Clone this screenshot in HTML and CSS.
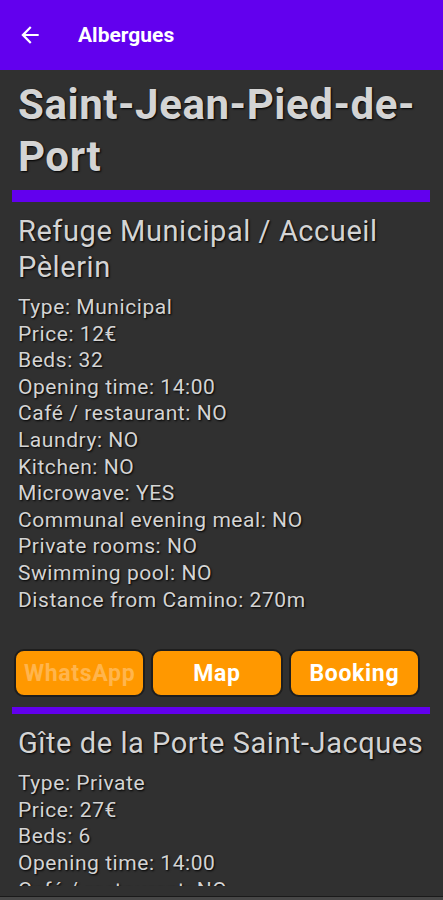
FILE: index.html
```html
<!DOCTYPE html>
<html lang="en">
<head>
    <meta charset="UTF-8">
    <meta name="viewport" content="width=device-width, initial-scale=1.0">
    <title>Albergues</title>
    <link rel="stylesheet" href="styles.css">
</head>
<body>

<header class="app-bar">
    <svg class="back" viewBox="0 0 24 24" width="26" height="26">
        <path d="M20 11H7.83l5.59-5.59L12 4l-8 8 8 8 1.41-1.41L7.83 13H20v-2z" fill="#fff"/>
    </svg>
    <span class="app-title">Albergues</span>
</header>

<div class="scroll">
    <h1 class="town">Saint-Jean-Pied-de-Port</h1>
    <div class="divider thick"></div>

    <!-- Albergue 1 -->
    <h2 class="name">Refuge Municipal / Accueil Pèlerin</h2>
    <div class="details">
        <div>Type: Municipal</div>
        <div>Price: 12€</div>
        <div>Beds: 32</div>
        <div>Opening time: 14:00</div>
        <div>Café / restaurant: NO</div>
        <div>Laundry: NO</div>
        <div>Kitchen: NO</div>
        <div>Microwave: YES</div>
        <div>Communal evening meal: NO</div>
        <div>Private rooms: NO</div>
        <div>Swimming pool: NO</div>
        <div>Distance from Camino: 270m</div>
    </div>
    <div class="buttons">
        <button class="btn disabled">WhatsApp</button>
        <button class="btn">Map</button>
        <button class="btn">Booking</button>
    </div>
    <div class="divider"></div>

    <!-- Albergue 2 -->
    <h2 class="name">Gîte de la Porte Saint-Jacques</h2>
    <div class="details">
        <div>Type: Private</div>
        <div>Price: 27€</div>
        <div>Beds: 6</div>
        <div>Opening time: 14:00</div>
        <div>Café / restaurant: NO</div>
    </div>
</div>

<div class="bottom-edge"></div>

</body>
</html>
```

FILE: styles.css
```css
body {
    margin: 0;
    height: 900px;
    overflow: hidden;
    font-family: Roboto, "Noto Sans", sans-serif;
    background-color: #303030;
    color: #d4d4d4;
}
.app-bar {
    height: 70px;
    background-color: #6200ee;
    display: flex;
    align-items: center;
    padding-left: 17px;
}
.back {
    display: block;
}
.app-title {
    margin-left: 35px;
    color: #fff;
    font-size: 21px;
    font-weight: bold;
}
.scroll {
    height: 816px;
    overflow: hidden;
    padding: 0 13px 0 12px;
    text-shadow: 1px 1px 2px #000;
    letter-spacing: 0.035em;
}
.town {
    margin: 9px 0 0 6px;
    font-size: 42px;
    line-height: 52px;
    font-weight: bold;
}
.divider {
    height: 7px;
    background-color: #6200ee;
    margin-top: 10px;
}
.divider.thick {
    height: 12px;
    margin-top: 7px;
}
.name {
    margin: 11px -10px 0 6px;
    font-size: 29px;
    line-height: 36px;
    font-weight: normal;
}
.details {
    margin: 9px 0 0 6px;
    font-size: 21px;
    line-height: 26.6px;
}
.buttons {
    display: flex;
    gap: 6px;
    margin: 36px 10px 0 2px;
}
.btn {
    flex: 1;
    height: 48px;
    border: 2px solid #1e1e1e;
    border-radius: 10px;
    background-color: #ff9800;
    color: #fff;
    font-family: Roboto, sans-serif;
    font-size: 23px;
    font-weight: bold;
    letter-spacing: 0.03em;
    padding: 0;
}
.btn.disabled {
    color: #ffb54d;
}
.bottom-edge {
    height: 10px;
    border-bottom: 1px solid #1a1a1a;
    box-shadow: 0 3px 0 #474747;
}
```
